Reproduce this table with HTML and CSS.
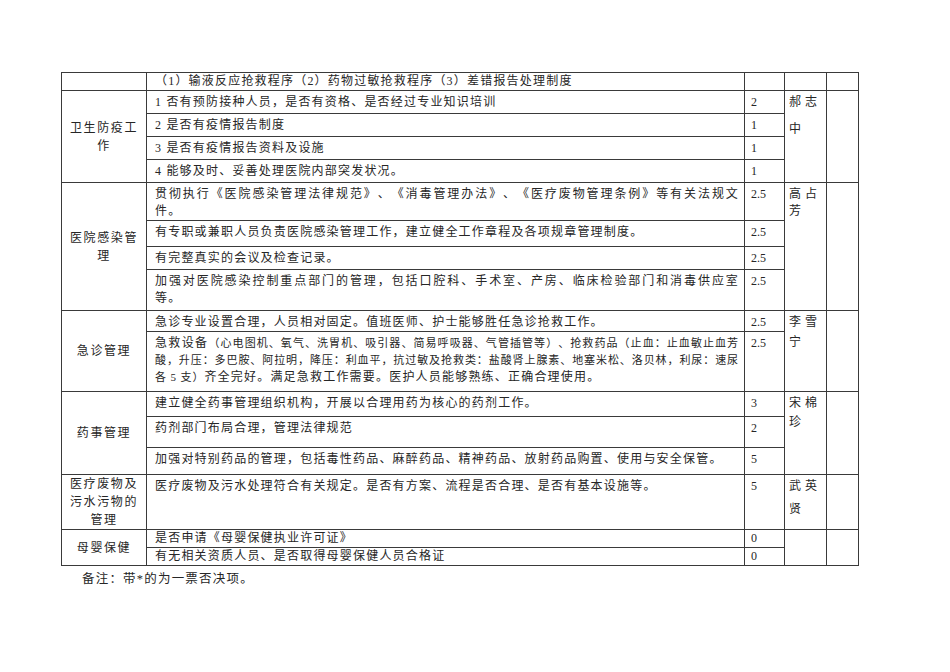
FILE: index.html
```html
<!DOCTYPE html>
<html lang="zh">
<head>
<meta charset="utf-8">
<title>检查表</title>
<link rel="stylesheet" href="styles.css">
</head>
<body>
<div class="page">
  <table class="sheet">
    <colgroup>
      <col class="c-cat">
      <col class="c-item">
      <col class="c-score">
      <col class="c-name">
      <col class="c-last">
    </colgroup>
    <tbody>
      <tr class="h18">
        <td class="cat"></td>
        <td class="item flat">（1）输液反应抢救程序（2）药物过敏抢救程序（3）差错报告处理制度</td>
        <td class="score"></td>
        <td class="name"></td>
        <td class="last"></td>
      </tr>
      <tr class="h23">
        <td class="cat" rowspan="4">卫生防疫工作</td>
        <td class="item">1 否有预防接种人员，是否有资格、是否经过专业知识培训</td>
        <td class="score">2</td>
        <td class="name" rowspan="4"><span class="n1">郝志</span><span class="n2 g10">中</span></td>
        <td class="last" rowspan="4"></td>
      </tr>
      <tr class="h23">
        <td class="item">2 是否有疫情报告制度</td>
        <td class="score">1</td>
      </tr>
      <tr class="h23">
        <td class="item">3 是否有疫情报告资料及设施</td>
        <td class="score">1</td>
      </tr>
      <tr class="h23">
        <td class="item">4 能够及时、妥善处理医院内部突发状况。</td>
        <td class="score">1</td>
      </tr>
      <tr class="h35">
        <td class="cat" rowspan="4">医院感染管理</td>
        <td class="item"><span class="ln full">贯彻执行《医院感染管理法律规范》、《消毒管理办法》、《医疗废物管理条例》等有关法规文</span><span class="ln">件。</span></td>
        <td class="score">2.5</td>
        <td class="name" rowspan="4"><span class="n1">高占</span><span class="n2 g0">芳</span></td>
        <td class="last" rowspan="4"></td>
      </tr>
      <tr class="h26">
        <td class="item">有专职或兼职人员负责医院感染管理工作，建立健全工作章程及各项规章管理制度。</td>
        <td class="score">2.5</td>
      </tr>
      <tr class="h23">
        <td class="item">有完整真实的会议及检查记录。</td>
        <td class="score">2.5</td>
      </tr>
      <tr class="h41">
        <td class="item"><span class="ln full">加强对医院感染控制重点部门的管理，包括口腔科、手术室、产房、临床检验部门和消毒供应室</span><span class="ln">等。</span></td>
        <td class="score">2.5</td>
      </tr>
      <tr class="h21">
        <td class="cat" rowspan="2">急诊管理</td>
        <td class="item">急诊专业设置合理，人员相对固定。值班医师、护士能够胜任急诊抢救工作。</td>
        <td class="score">2.5</td>
        <td class="name" rowspan="2"><span class="n1">李雪</span><span class="n2 g3">宁</span></td>
        <td class="last" rowspan="2"></td>
      </tr>
      <tr class="h60">
        <td class="item"><span class="ln full">急救设备<span class="sm">（心电图机、氧气、洗胃机、吸引器、简易呼吸器、气管插管等）、抢救药品（止血：止血敏止血芳</span></span><span class="ln full sm">酸，升压：多巴胺、阿拉明，降压：利血平，抗过敏及抢救类：盐酸肾上腺素、地塞米松、洛贝林，利尿：速尿</span><span class="ln"><span class="sm">各 5 支）</span>齐全完好。满足急救工作需要。医护人员能够熟练、正确合理使用。</span></td>
        <td class="score">2.5</td>
      </tr>
      <tr class="h25">
        <td class="cat" rowspan="3">药事管理</td>
        <td class="item">建立健全药事管理组织机构，开展以合理用药为核心的药剂工作。</td>
        <td class="score">3</td>
        <td class="name" rowspan="3"><span class="n1">宋棉</span><span class="n2 g2">珍</span></td>
        <td class="last" rowspan="3"></td>
      </tr>
      <tr class="h31">
        <td class="item">药剂部门布局合理，管理法律规范</td>
        <td class="score">2</td>
      </tr>
      <tr class="h27">
        <td class="item">加强对特别药品的管理，包括毒性药品、麻醉药品、精神药品、放射药品购置、使用与安全保管。</td>
        <td class="score">5</td>
      </tr>
      <tr class="h55">
        <td class="cat">医疗废物及污水污物的管理</td>
        <td class="item">医疗废物及污水处理符合有关规定。是否有方案、流程是否合理、是否有基本设施等。</td>
        <td class="score">5</td>
        <td class="name"><span class="n1">武英</span><span class="n2 g6">贤</span></td>
        <td class="last"></td>
      </tr>
      <tr class="h18">
        <td class="cat" rowspan="2">母婴保健</td>
        <td class="item flat">是否申请《母婴保健执业许可证》</td>
        <td class="score flat">0</td>
        <td class="name" rowspan="2"></td>
        <td class="last" rowspan="2"></td>
      </tr>
      <tr class="h18">
        <td class="item flat">有无相关资质人员、是否取得母婴保健人员合格证</td>
        <td class="score flat">0</td>
      </tr>
    </tbody>
  </table>
  <p class="note">备注：带*的为一票否决项。</p>
</div>
</body>
</html>
```

FILE: styles.css
```css
html, body {
  margin: 0;
  padding: 0;
  background: #ffffff;
}

body {
  font-family: "Liberation Serif", "Noto Sans CJK SC", serif;
  font-size: 12px;
  color: #262626;
  text-spacing-trim: space-all;
}

.page {
  padding: 72px 0 0 61px;
}

.sheet {
  border-collapse: collapse;
  table-layout: fixed;
  width: 797px;
}

.c-cat { width: 85px; }
.c-item { width: 598px; }
.c-score { width: 40px; }
.c-name { width: 42px; }
.c-last { width: 32px; }

.sheet td {
  border: 1px solid #3a3a3a;
  padding: 0;
  line-height: 17px;
  letter-spacing: 1.2px;
  vertical-align: top;
  overflow: hidden;
}

.h18 { height: 18px; }
.h21 { height: 21px; }
.h23 { height: 23px; }
.h25 { height: 25px; }
.h26 { height: 26px; }
.h27 { height: 27px; }
.h31 { height: 31px; }
.h35 { height: 35px; }
.h41 { height: 41px; }
.h55 { height: 55px; }
.h60 { height: 60px; }

.sheet td.cat {
  text-align: center;
  vertical-align: middle;
  padding: 0 4px;
  line-height: 18px;
  letter-spacing: 1.6px;
}

.sheet td.item {
  padding: 3px 5px 0 8px;
  text-align: justify;
}

.sheet td.score {
  padding: 3px 2px 0 6px;
  letter-spacing: 0;
}

.sheet td.name {
  padding: 3px 0 0 4px;
  letter-spacing: 4px;
}

.sheet td.flat {
  padding-top: 0;
}

.ln {
  display: block;
}

.ln.full {
  text-align-last: justify;
}

.sm {
  font-size: 11px;
  letter-spacing: 0.9px;
}

.n1, .n2 {
  display: block;
}

.g0 { margin-top: 0; }
.g2 { margin-top: 2px; }
.g3 { margin-top: 3px; }
.g6 { margin-top: 6px; }
.g10 { margin-top: 10px; }

.note {
  margin: 4px 0 0 21px;
  font-size: 12.5px;
  line-height: 18px;
  letter-spacing: 1.2px;
}
```
